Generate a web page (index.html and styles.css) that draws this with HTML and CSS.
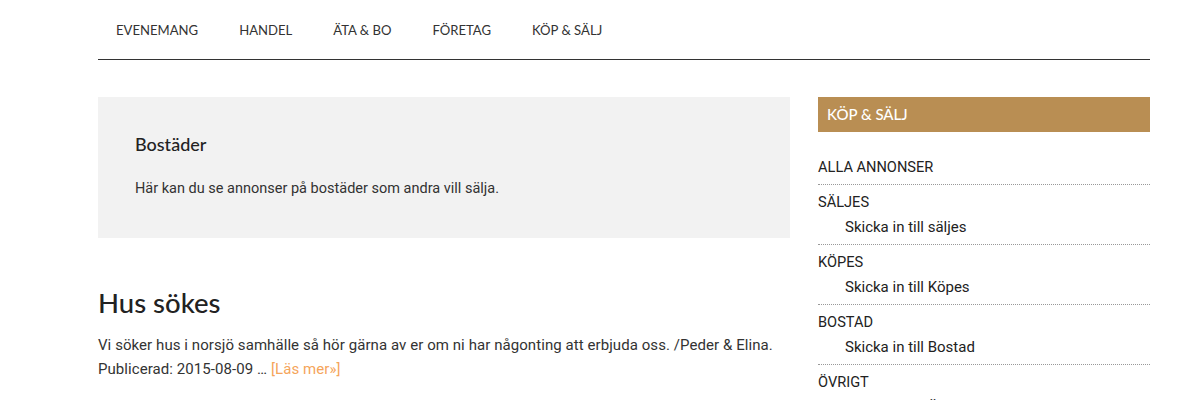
FILE: index.html
```html
<!DOCTYPE html>
<html lang="sv">
<head>
    <meta charset="UTF-8">
    <title>Köp &amp; Sälj - Bostäder</title>
    <link rel="stylesheet" href="styles.css">
</head>
<body>
    <div class="wrapper">
        <nav class="main-nav">
            <a href="#">Evenemang</a>
            <a href="#">Handel</a>
            <a href="#">Äta &amp; Bo</a>
            <a href="#">Företag</a>
            <a href="#">Köp &amp; Sälj</a>
        </nav>

        <div class="layout">
            <main class="content">
                <div class="intro">
                    <h2>Bostäder</h2>
                    <p>Här kan du se annonser på bostäder som andra vill sälja.</p>
                </div>

                <article class="post">
                    <h1>Hus sökes</h1>
                    <p>Vi söker hus i norsjö samhälle så hör gärna av er om ni har någonting att erbjuda oss. /Peder &amp; Elina.<br>
                    Publicerad: 2015-08-09 … <a href="#" class="more">[Läs mer»]</a></p>
                </article>
            </main>

            <aside class="sidebar">
                <h3 class="widget-title">Köp &amp; Sälj</h3>
                <ul class="cat-list">
                    <li><a href="#">Alla annonser</a></li>
                    <li>
                        <a href="#">Säljes</a>
                        <a href="#" class="sub">Skicka in till säljes</a>
                    </li>
                    <li>
                        <a href="#">Köpes</a>
                        <a href="#" class="sub">Skicka in till Köpes</a>
                    </li>
                    <li>
                        <a href="#">Bostad</a>
                        <a href="#" class="sub">Skicka in till Bostad</a>
                    </li>
                    <li>
                        <a href="#">Övrigt</a>
                        <a href="#" class="sub">Skicka in till Övrigt</a>
                    </li>
                </ul>
            </aside>
        </div>
    </div>
</body>
</html>
```

FILE: styles.css
```css
body {
    margin: 0;
    font-family: 'Roboto', 'Liberation Sans', sans-serif;
    font-size: 14px;
    color: #333;
    background: #fff;
}

a {
    text-decoration: none;
    color: inherit;
}

.wrapper {
    width: 1052px;
    margin-left: 98px;
}

.main-nav {
    display: flex;
    gap: 41px;
    padding: 0 18px;
    height: 59px;
    align-items: center;
    border-bottom: 1px solid #333;
}

.main-nav a {
    font-family: 'Lato', sans-serif;
    font-size: 13.1px;
    text-transform: uppercase;
    color: #333;
}

.layout {
    display: flex;
    gap: 28px;
    margin-top: 37px;
}

.content {
    width: 692px;
}

.intro {
    background: #f2f2f2;
    padding: 36px 37px 39px;
    height: 66px;
}

.intro h2 {
    font-family: 'Lato', sans-serif;
    font-weight: 500;
    font-size: 18px;
    color: #222;
    margin: 0 0 25px;
}

.intro p {
    margin: 0;
    font-size: 14.5px;
}

.post {
    padding-top: 48px;
}

.post h1 {
    font-family: 'Lato', sans-serif;
    font-weight: 500;
    font-size: 27.5px;
    color: #222;
    margin: 0 0 14px;
}

.post p {
    margin: 0;
    font-size: 15px;
    letter-spacing: 0.07px;
    line-height: 24px;
}

.more {
    color: #f5a55b;
}

.sidebar {
    width: 332px;
}

.widget-title {
    margin: 0;
    height: 35px;
    line-height: 35px;
    padding: 0 9px;
    background: #b98e53;
    color: #fff;
    font-family: 'Lato', sans-serif;
    font-weight: 500;
    font-size: 15px;
    text-transform: uppercase;
}

.cat-list {
    list-style: none;
    margin: 22px 0 0;
    padding: 0;
}

.cat-list li {
    border-bottom: 1px dotted #999;
    padding: 3px 0 7px;
}

.cat-list li + li {
    padding-top: 7px;
}

.cat-list a {
    display: block;
    line-height: 20px;
    font-size: 14.6px;
    text-transform: uppercase;
    color: #222;
}

.cat-list a.sub {
    text-transform: none;
    font-size: 15px;
    padding-left: 27px;
    margin-top: 5px;
    color: #222;
}
```
